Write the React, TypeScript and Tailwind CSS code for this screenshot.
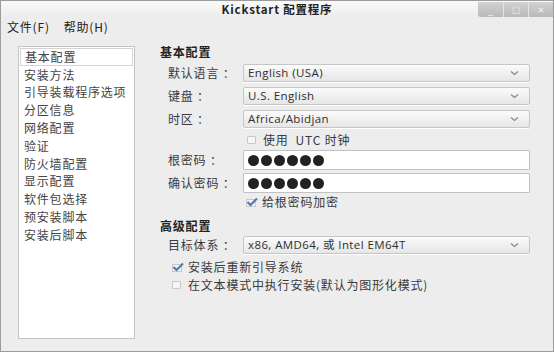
import React from 'react'

const cjk = "font-['Noto_Sans_CJK_SC','Noto_Sans',sans-serif] tracking-[0.8px]"
const latin = "font-['Open_Sans','Noto_Sans_CJK_SC',sans-serif] tracking-[0.4px]"

const navItems = [
  '基本配置',
  '安装方法',
  '引导装载程序选项',
  '分区信息',
  '网络配置',
  '验证',
  '防火墙配置',
  '显示配置',
  '软件包选择',
  '预安装脚本',
  '安装后脚本',
]

function Chevron() {
  return (
    <svg width="9" height="6" viewBox="0 0 9 6" className="shrink-0">
      <path d="M1 1.5 L4.5 4.5 L8 1.5" fill="none" stroke="#8a8a8a" strokeWidth="1.3" />
    </svg>
  )
}

function Select({ value }: { value: string }) {
  return (
    <div className="flex items-center justify-between h-[18px] w-[287px] px-[4px] pr-[10px] rounded-[2px] border border-[#c6c6c6] bg-gradient-to-b from-[#fbfbfb] to-[#e6e6e6] shadow-[0_1px_0_#fff]">
      <span className={`${latin} text-[11.5px] text-[#2e2e2e] leading-none`}>{value}</span>
      <Chevron />
    </div>
  )
}

function Password() {
  return (
    <div className="flex items-center gap-[2px] h-[20px] w-[287px] px-[4px] border border-[#c2c2c2] bg-white rounded-[1px]">
      {[0, 1, 2, 3, 4, 5].map((i) => (
        <span key={i} className="w-[11px] h-[11px] rounded-full bg-[#222]" />
      ))}
    </div>
  )
}

function Check({ checked }: { checked: boolean }) {
  if (checked) {
    return (
      <svg width="12" height="10" viewBox="0 0 12 10" className="shrink-0">
        <rect x="0.5" y="2.5" width="9" height="7" fill="#f2f2f2" stroke="#c8c8c8" />
        <path d="M1.5 5 L4.5 8 L11 1.5" fill="none" stroke="#4a78b0" strokeWidth="2" />
      </svg>
    )
  }
  return <span className="w-[9px] h-[8px] shrink-0 border border-[#c8c8c8] bg-[#f6f6f6] rounded-[1px]" />
}

function Label({ children }: { children: React.ReactNode }) {
  return <span className={`${cjk} w-[75px] shrink-0 text-[12px] text-[#3a3a3a] leading-none whitespace-pre`}>{children}</span>
}

export default function App() {
  return (
    <div className="w-[554px] h-[352px] flex flex-col bg-[#ededed] border border-[#9c9c9c] overflow-hidden">
      {/* title bar */}
      <div className="relative h-[17px] shrink-0 flex items-center justify-center bg-gradient-to-b from-[#fafafa] to-[#ececec]">
        <span className={`${cjk} text-[11.5px] font-bold text-[#222] leading-none`}>Kickstart 配置程序</span>
        <div className="absolute right-0 top-[1px] flex h-[15px]">
          {['_', '□', '×'].map((g, i) => (
            <div
              key={i}
              className={`w-[25px] h-[15px] flex items-center justify-center bg-gradient-to-b from-[#d2d2d2] to-[#b9b9b9] text-[#f4f4f4] text-[11px] leading-none ${i > 0 ? 'border-l border-[#e4e4e4]' : 'rounded-bl-[3px]'}`}
            >
              {g}
            </div>
          ))}
        </div>
      </div>

      {/* menu bar */}
      <div className={`${cjk} h-[17px] shrink-0 flex items-center gap-[14px] pl-[6px] text-[12px] text-[#222]`}>
        <span>文件(F)</span>
        <span>帮助(H)</span>
      </div>

      {/* body */}
      <div className="flex pl-[17px] pt-[11px]">
        {/* nav list */}
        <div className="w-[117px] h-[293px] shrink-0 bg-white border border-[#c4c4c4] p-[1px]">
          {navItems.map((item, i) => (
            <div
              key={item}
              className={`${cjk} h-[17.8px] flex items-center pl-[4px] text-[12px] text-[#444] leading-none ${i === 0 ? 'border border-[#d4d4d4]' : ''}`}
            >
              {item}
            </div>
          ))}
        </div>

        {/* settings */}
        <div className="flex flex-col pl-[25px] mt-[-2px]">
          <div className={`${cjk} h-[16px] flex items-center text-[12px] font-bold text-[#222]`}>基本配置</div>

          <div className="flex flex-col gap-[5px] pl-[8px] mt-[4px]">
            <div className="flex items-center">
              <Label>默认语言 ：</Label>
              <Select value="English (USA)" />
            </div>
            <div className="flex items-center">
              <Label>键盘 ：</Label>
              <Select value="U.S. English" />
            </div>
            <div className="flex items-center">
              <Label>时区 ：</Label>
              <Select value="Africa/Abidjan" />
            </div>
          </div>

          <div className={`${cjk} h-[17px] mt-[3px] flex items-center gap-[7px] pl-[87px] text-[12px] text-[#3a3a3a] whitespace-pre`}>
            <Check checked={false} />
            <span>使用  UTC 时钟</span>
          </div>

          <div className="flex flex-col gap-[3px] pl-[8px] mt-[2px]">
            <div className="flex items-center">
              <Label>根密码 ：</Label>
              <Password />
            </div>
            <div className="flex items-center">
              <Label>确认密码 ：</Label>
              <Password />
            </div>
          </div>

          <div className={`${cjk} h-[17px] flex items-center gap-[4px] pl-[86px] text-[12px] text-[#3a3a3a]`}>
            <Check checked={true} />
            <span>给根密码加密</span>
          </div>

          <div className={`${cjk} h-[16px] mt-[8px] flex items-center text-[12px] font-bold text-[#222]`}>高级配置</div>

          <div className="flex items-center pl-[8px] mt-[2px]">
            <Label>目标体系 ：</Label>
            <Select value="x86, AMD64, 或  Intel EM64T" />
          </div>

          <div className={`${cjk} h-[17px] mt-[4px] flex items-center gap-[4px] pl-[12px] text-[12px] text-[#3a3a3a]`}>
            <Check checked={true} />
            <span>安装后重新引导系统</span>
          </div>
          <div className={`${cjk} h-[17px] mt-[1px] flex items-center gap-[7px] pl-[12px] text-[12px] text-[#3a3a3a]`}>
            <Check checked={false} />
            <span>在文本模式中执行安装(默认为图形化模式)</span>
          </div>
        </div>
      </div>
    </div>
  )
}
